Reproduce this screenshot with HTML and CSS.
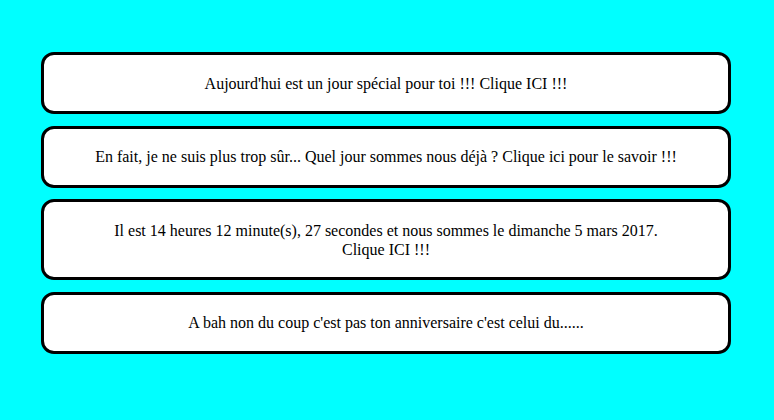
FILE: index.html
```html
<!DOCTYPE html>
<html lang="fr">
<head>
<meta charset="utf-8">
<title>Jour spécial</title>
<link rel="stylesheet" href="styles.css">
</head>
<body>
<main class="list">
  <div class="card">Aujourd'hui est un jour spécial pour toi !!! Clique ICI !!!</div>
  <div class="card">En fait, je ne suis plus trop sûr... Quel jour sommes nous déjà ? Clique ici pour le savoir !!!</div>
  <div class="card">Il est 14 heures 12 minute(s), 27 secondes et nous sommes le dimanche 5 mars 2017.<br>Clique ICI !!!</div>
  <div class="card">A bah non du coup c'est pas ton anniversaire c'est celui du......</div>
</main>
</body>
</html>
```
FILE: styles.css
```css
html, body {
  margin: 0;
  padding: 0;
  background: #00ffff;
}
body {
  font-family: "Liberation Serif", "Times New Roman", serif;
  font-size: 16px;
  color: #000;
}
.list {
  width: 690px;
  margin: 0 0 0 41px;
  padding-top: 52px;
  display: flex;
  flex-direction: column;
  gap: 11.5px;
}
.card {
  background: #fff;
  border: 3px solid #000;
  border-radius: 13px;
  padding: 18.5px 10px;
  text-align: center;
  line-height: 19px;
}
```
